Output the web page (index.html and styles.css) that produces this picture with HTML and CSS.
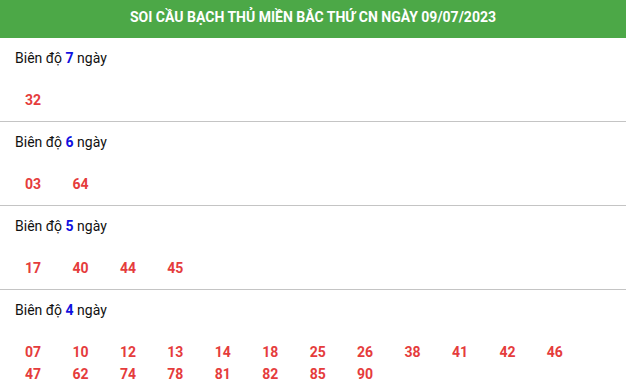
FILE: index.html
```html
<!DOCTYPE html>
<html lang="vi">
<head>
<meta charset="utf-8">
<link rel="stylesheet" href="styles.css">
</head>
<body>
<div class="box">
  <div class="head">SOI CẦU BẠCH THỦ MIỀN BẮC THỨ CN NGÀY 09/07/2023</div>
  <div class="sec">
    <div class="lbl">Biên độ <b>7</b> ngày</div>
    <div class="nums"><span>32</span></div>
  </div>
  <div class="sec">
    <div class="lbl">Biên độ <b>6</b> ngày</div>
    <div class="nums"><span>03</span><span>64</span></div>
  </div>
  <div class="sec">
    <div class="lbl">Biên độ <b>5</b> ngày</div>
    <div class="nums"><span>17</span><span>40</span><span>44</span><span>45</span></div>
  </div>
  <div class="sec">
    <div class="lbl">Biên độ <b>4</b> ngày</div>
    <div class="nums"><span>07</span><span>10</span><span>12</span><span>13</span><span>14</span><span>18</span><span>25</span><span>26</span><span>38</span><span>41</span><span>42</span><span>46</span><span>47</span><span>62</span><span>74</span><span>78</span><span>81</span><span>82</span><span>85</span><span>90</span></div>
  </div>
</div>
</body>
</html>
```
FILE: styles.css
```css
html, body { margin: 0; padding: 0; background: #fff; }
body { font-family: Roboto, "Liberation Sans", Arial, sans-serif; color: #111; }
.box { width: 626px; }
.head {
  background: #4ca847;
  color: #fff;
  font-weight: 700;
  font-size: 14px;
  height: 38px;
  line-height: 35px;
  text-align: center;
}
.sec {
  padding: 9px 0 10px 15px;
  border-bottom: 1px solid #c4c4c4;
}
.lbl { font-size: 14px; line-height: 22px; color: #111; }
.lbl b { color: #1010e0; font-weight: 700; }
.nums {
  margin-top: 20px;
  padding-left: 10px;
  display: grid;
  grid-template-columns: repeat(12, 47.45px);
  font-size: 14px;
  font-weight: 700;
  line-height: 22px;
  color: #e53c3c;
}
```
